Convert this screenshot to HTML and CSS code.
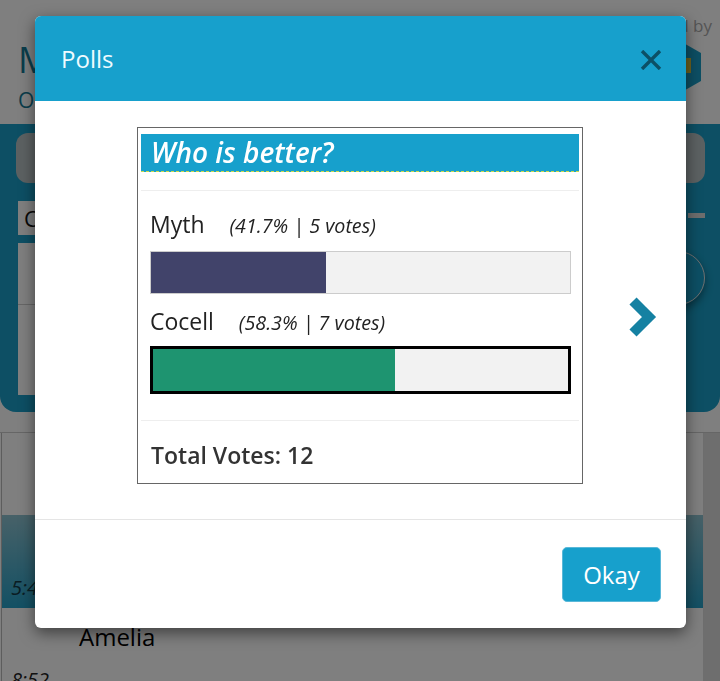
FILE: index.html
```html
<!DOCTYPE html>
<html lang="en">
<head>
    <meta charset="UTF-8">
    <meta name="viewport" content="width=device-width, initial-scale=1.0">
    <title>Polls</title>
    <link rel="stylesheet" href="styles.css">
</head>
<body>
    <div class="app">
        <div class="app-top">
            <div class="app-title">
                <h1>Myth &amp; Cocell</h1>
                <p>Online</p>
            </div>
            <div class="powered">
                <span>Powered by</span>
                <svg class="logo" width="46" height="56" viewBox="0 0 46 56">
                    <polygon points="23,2 44,14 44,42 23,54 2,42 2,14" fill="#1a9fc8"/>
                    <rect x="29" y="19" width="5" height="15" fill="#d8c23a"/>
                </svg>
            </div>
        </div>

        <div class="panel">
            <div class="search"></div>
            <div class="panel-row">
                <div class="field">Choose a poll</div>
                <div class="toggle"></div>
            </div>
            <div class="panel-box">
                <div class="box-list">
                    <div class="box-item"></div>
                    <div class="box-item"></div>
                </div>
                <div class="round-btn"></div>
            </div>
        </div>

        <div class="list">
            <div class="list-main">
                <div class="row row-head"></div>
                <div class="row active">
                    <div class="name">Myth</div>
                    <div class="time">5:47</div>
                </div>
                <div class="row">
                    <div class="name">Amelia</div>
                    <div class="time">8:52</div>
                </div>
            </div>
            <div class="scroll"></div>
        </div>
    </div>

    <div class="backdrop"></div>

    <div class="modal">
        <div class="modal-header">
            <h4 class="modal-title">Polls</h4>
            <button class="close">
                <svg width="22" height="20" viewBox="0 0 22 20">
                    <path d="M2 1 L20 19 M20 1 L2 19" stroke="#0c5066" stroke-width="3.4" fill="none"/>
                </svg>
            </button>
        </div>
        <div class="modal-body">
            <div class="poll">
                <div class="poll-title">Who is better?</div>
                <div class="poll-options">
                    <div class="option-label">Myth <span class="option-count">(41.7% | 5 votes)</span></div>
                    <div class="bar"><div class="bar-fill fill-a" style="width: 41.7%;"></div></div>
                    <div class="option-label">Cocell <span class="option-count">(58.3% | 7 votes)</span></div>
                    <div class="bar bar-picked"><div class="bar-fill fill-b" style="width: 58.3%;"></div></div>
                </div>
                <div class="poll-total">Total Votes: 12</div>
            </div>
            <div class="next">
                <svg width="30" height="40" viewBox="0 0 30 40">
                    <polyline points="5,4 21,20 5,36" fill="none" stroke="#1581a2" stroke-width="10"/>
                </svg>
            </div>
        </div>
        <div class="modal-footer">
            <button class="okay">Okay</button>
        </div>
    </div>
</body>
</html>
```

FILE: styles.css
```css
body {
    margin: 0;
    height: 681px;
    overflow: hidden;
    font-family: "Open Sans", "Noto Sans", sans-serif;
    background-color: #fff;
}

/* page behind the dialog */

.app-top {
    display: flex;
    justify-content: space-between;
    height: 124px;
    padding: 0 8px 0 18px;
    box-sizing: border-box;
}

.app-title h1 {
    margin: 38px 0 0;
    font-size: 36px;
    line-height: 44px;
    font-weight: 400;
    color: #157a96;
    white-space: nowrap;
}

.app-title p {
    margin: 4px 0 0;
    font-size: 21px;
    line-height: 28px;
    color: #157a96;
}

.powered {
    display: flex;
    flex-direction: column;
    align-items: flex-end;
    padding-top: 14px;
    font-size: 17px;
    color: #aaa;
}

.logo {
    margin: 2px 9px 0 0;
}

.panel {
    background-color: #1a9fc8;
    border-radius: 0 0 16px 16px;
    padding: 9px 15px 17px 16px;
}

.search {
    height: 50px;
    border-radius: 12px;
    background-color: #b8c2c5;
}

.panel-row {
    display: flex;
    align-items: flex-start;
    gap: 16px;
    margin-top: 18px;
    padding-left: 2px;
}

.field {
    flex: 1;
    height: 34px;
    line-height: 34px;
    padding-left: 6px;
    background-color: #fff;
    font-size: 22px;
    color: #111;
}

.toggle {
    width: 17px;
    height: 5px;
    margin-top: 12px;
    background-color: #ddd;
}

.panel-box {
    display: flex;
    align-items: flex-start;
    margin-top: 8px;
    padding-left: 2px;
}

.box-list {
    width: 620px;
    background-color: #fff;
}

.box-item {
    height: 61px;
    border-bottom: 1px solid #ccc;
}

.box-item + .box-item {
    height: 90px;
    border-bottom: none;
}

.round-btn {
    width: 54px;
    height: 54px;
    margin: 8px 0 0 13px;
    border-radius: 50%;
    border: 1px solid #ddd;
    box-sizing: border-box;
    box-shadow: 0 4px 8px rgba(0,0,0,0.4);
}

.list {
    display: flex;
    margin-top: 20px;
    border-top: 1px solid #ccc;
}

.list-main {
    flex: 1;
    margin-left: 1px;
    border-left: 1px solid #bbb;
}

.scroll {
    width: 17px;
    height: 260px;
    background-color: #dcdcdc;
}

.row {
    height: 93px;
    padding: 14px 9px 0;
    box-sizing: border-box;
}

.row-head {
    height: 82px;
}

.row.active {
    background: linear-gradient(#8fc3d1, #26a1c8);
}

.name {
    margin-left: 68px;
    font-size: 24px;
    line-height: 30px;
    color: #000;
}

.time {
    margin-top: 14px;
    font-size: 20px;
    line-height: 28px;
    font-style: italic;
    color: #222;
}

.row.active .time {
    margin-top: 15px;
    color: #143a46;
}

/* dialog */

.backdrop {
    position: fixed;
    top: 0;
    left: 0;
    right: 0;
    bottom: 0;
    background-color: rgba(0,0,0,0.5);
}

.modal {
    position: absolute;
    top: 16px;
    left: 35px;
    width: 651px;
    background-color: #fff;
    border-radius: 6px;
    box-shadow: 0 5px 15px rgba(0,0,0,0.5);
    overflow: hidden;
}

.modal-header {
    display: flex;
    align-items: center;
    justify-content: space-between;
    height: 85px;
    padding: 0 24px 0 26px;
    background-color: #17a0cc;
}

.modal-title {
    margin: 0;
    font-size: 24px;
    font-weight: 400;
    color: #effbff;
}

.close {
    border: none;
    background: none;
    padding: 0;
    margin-top: 2px;
    line-height: 0;
}

.modal-body {
    display: flex;
    align-items: flex-start;
    padding: 26px 0 35px 102px;
    border-bottom: 1px solid #e5e5e5;
}

.poll {
    width: 446px;
    box-sizing: border-box;
    border: 1px solid #666;
    padding: 6px 3px 0;
}

.poll-title {
    height: 37px;
    line-height: 36px;
    padding-left: 10px;
    background-color: #17a0cc;
    border-bottom: 1px dashed #c9d94c;
    font-size: 28px;
    font-style: italic;
    font-weight: 600;
    color: #fff;
}

.poll-options {
    margin-top: 18px;
    padding: 18px 8px 26px 9px;
    border-top: 1px solid #eee;
    border-bottom: 1px solid #eee;
}

.option-label {
    height: 30px;
    font-size: 23px;
    line-height: 30px;
    color: #222;
}

.option-count {
    margin-left: 19px;
    font-size: 19.7px;
    line-height: 20px;
    font-style: italic;
}

.bar {
    height: 43px;
    margin: 12px 0;
    border: 1px solid #ccc;
    box-sizing: border-box;
    background-color: #f2f2f2;
}

.bar-picked {
    height: 48px;
    margin: 10px 0 0;
    border: 3px solid #000;
}

.bar-fill {
    height: 100%;
}

.fill-a {
    background-color: #41436a;
}

.fill-b {
    background-color: #1e9470;
}

.poll-total {
    padding: 19px 10px 13px;
    font-size: 23px;
    line-height: 30px;
    font-weight: 600;
    color: #333;
}

.next {
    margin: 170px 0 0 45px;
    line-height: 0;
}

.modal-footer {
    display: flex;
    justify-content: flex-end;
    padding: 27px 25px 26px;
}

.okay {
    width: 99px;
    height: 55px;
    border: 1px solid #5ab8d8;
    border-radius: 5px;
    background-color: #17a0cc;
    color: #fff;
    font-family: "Open Sans", "Noto Sans", sans-serif;
    font-size: 24px;
}
```
